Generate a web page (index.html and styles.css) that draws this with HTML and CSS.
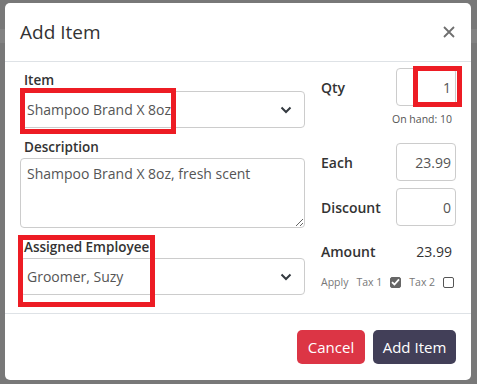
FILE: index.html
```html
<!DOCTYPE html>
<html lang="en">
<head>
    <meta charset="UTF-8">
    <meta name="viewport" content="width=device-width, initial-scale=1.0">
    <title>Add Item</title>
    <link rel="stylesheet" href="styles.css">
</head>
<body>
    <div class="backdrop">
        <div class="page-band"></div>
        <div class="modal">
            <div class="modal-header">
                <h2>Add Item</h2>
                <svg class="close" width="12" height="12" viewBox="0 0 12 12">
                    <path d="M1 1L11 11M11 1L1 11" stroke="#6f6f6f" stroke-width="1.8" fill="none"/>
                </svg>
            </div>

            <div class="modal-body">
                <div class="col-left">
                    <div class="field">
                        <label>Item</label>
                        <div class="select">
                            <span>Shampoo Brand X 8oz</span>
                            <svg width="12" height="8" viewBox="0 0 12 8"><path d="M1.5 1.5L6 6L10.5 1.5" stroke="#343a40" stroke-width="2" fill="none"/></svg>
                        </div>
                        <span class="mark mark-item"></span>
                    </div>
                    <div class="field">
                        <label>Description</label>
                        <textarea>Shampoo Brand X 8oz, fresh scent</textarea>
                    </div>
                    <div class="field">
                        <label>Assigned Employee</label>
                        <div class="select">
                            <span>Groomer, Suzy</span>
                            <svg width="12" height="8" viewBox="0 0 12 8"><path d="M1.5 1.5L6 6L10.5 1.5" stroke="#343a40" stroke-width="2" fill="none"/></svg>
                        </div>
                        <span class="mark mark-employee"></span>
                    </div>
                </div>

                <div class="col-right">
                    <div class="row row-qty">
                        <span class="row-label">Qty</span>
                        <div class="num">1</div>
                        <span class="mark mark-qty"></span>
                    </div>
                    <div class="on-hand">On hand: 10</div>
                    <div class="row row-each">
                        <span class="row-label">Each</span>
                        <div class="num">23.99</div>
                    </div>
                    <div class="row row-discount">
                        <span class="row-label">Discount</span>
                        <div class="num">0</div>
                    </div>
                    <div class="row row-amount">
                        <span class="row-label">Amount</span>
                        <span class="amount">23.99</span>
                    </div>
                    <div class="tax-row">
                        <span>Apply</span>
                        <span class="tax">Tax 1</span>
                        <span class="check checked">
                            <svg width="9" height="8" viewBox="0 0 9 8"><path d="M1 4.2L3.4 6.5L8 1.3" stroke="#fff" stroke-width="1.8" fill="none"/></svg>
                        </span>
                        <span class="tax">Tax 2</span>
                        <span class="check"></span>
                    </div>
                </div>
            </div>

            <div class="modal-footer">
                <button class="btn btn-cancel">Cancel</button>
                <button class="btn btn-add">Add Item</button>
            </div>
        </div>
        <div class="page-logo">Pawz Gr<span>oo</span>m</div>
    </div>
</body>
</html>
```

FILE: styles.css
```css
body {
    margin: 0;
    font-family: "Open Sans", "Noto Sans", sans-serif;
    color: #333;
}

.backdrop {
    position: relative;
    height: 384px;
    padding: 3px 0 0 5px;
    box-sizing: border-box;
    background: #787878;
    overflow: hidden;
}

.page-band {
    position: absolute;
    left: 0;
    right: 0;
    top: 29px;
    height: 14px;
    background: #828282;
}

.page-logo {
    position: absolute;
    top: -26px;
    left: 290px;
    z-index: 2;
    font-size: 24px;
    font-weight: bold;
    font-style: italic;
    color: #222;
}

.page-logo span {
    color: #1a8a86;
}

.modal {
    position: relative;
    width: 466px;
    height: 377px;
    background: #fff;
    border-radius: 5px;
    display: flex;
    flex-direction: column;
    z-index: 1;
}

.modal-header {
    height: 58px;
    padding: 0 15px 0 15px;
    display: flex;
    align-items: center;
    justify-content: space-between;
    border-bottom: 1px solid #dee2e6;
}

.modal-header h2 {
    margin: 0;
    font-size: 19px;
    font-weight: normal;
    color: #333;
}

.close {
    margin-right: 1px;
}

.modal-body {
    display: flex;
    gap: 16px;
    padding: 6px 15px 0 15px;
    height: 245px;
    border-bottom: 1px solid #dee2e6;
}

.col-left {
    width: 285px;
    padding-top: 2px;
}

.field {
    position: relative;
    margin-bottom: 9px;
}

.field label {
    display: block;
    font-size: 13.5px;
    font-weight: 600;
    line-height: 20px;
    padding-left: 4px;
    margin-bottom: 1px;
    color: #333;
}

.select {
    height: 37px;
    box-sizing: border-box;
    border: 1px solid #ccc;
    border-radius: 4px;
    padding: 0 12px 0 6px;
    display: flex;
    align-items: center;
    justify-content: space-between;
    font-size: 14px;
    color: #555;
}

textarea {
    display: block;
    width: 100%;
    height: 70px;
    box-sizing: border-box;
    border: 1px solid #ccc;
    border-radius: 4px;
    padding: 5px 6px;
    font-family: inherit;
    font-size: 14px;
    color: #555;
}

.mark {
    position: absolute;
    border: 5px solid #ed1c24;
    box-sizing: border-box;
}

.mark-item {
    left: 0;
    top: 18px;
    width: 156px;
    height: 46px;
}

.mark-employee {
    left: -2px;
    top: -2px;
    width: 137px;
    height: 72px;
}

.mark-qty {
    left: 92px;
    top: -2px;
    width: 49px;
    height: 41px;
}

.col-right {
    width: 135px;
}

.row {
    position: relative;
    display: flex;
    align-items: center;
    justify-content: space-between;
}

.row-label {
    font-size: 14px;
    font-weight: 600;
    color: #333;
}

.num {
    width: 60px;
    height: 38px;
    box-sizing: border-box;
    border: 1px solid #ccc;
    border-radius: 4px;
    padding: 0 4px;
    display: flex;
    align-items: center;
    justify-content: flex-end;
    font-size: 14px;
    color: #555;
}

.on-hand {
    text-align: right;
    font-size: 10.5px;
    line-height: 16px;
    color: #555;
    margin: 5px 4px 0 0;
}

.row-each {
    margin-top: 16px;
}

.row-discount {
    margin-top: 7px;
}

.row-amount {
    margin-top: 15px;
    height: 20px;
}

.amount {
    font-size: 14px;
    color: #333;
    margin-right: 4px;
}

.tax-row {
    display: flex;
    align-items: center;
    margin-top: 13px;
    height: 16px;
    font-size: 10.5px;
    color: #777;
}

.tax {
    margin-left: 8px;
}

.check {
    width: 11px;
    height: 11px;
    margin-left: 8px;
    box-sizing: border-box;
    border: 1px solid #555;
    border-radius: 2px;
    display: flex;
    align-items: center;
    justify-content: center;
}

.check.checked {
    background: #666;
    border-color: #666;
}

.modal-footer {
    flex: 1;
    display: flex;
    align-items: center;
    justify-content: flex-end;
    gap: 8px;
    padding: 0 15px;
}

.btn {
    height: 34px;
    border: none;
    border-radius: 5px;
    color: #fff;
    font-family: inherit;
    font-size: 15px;
    padding: 0;
}

.btn-cancel {
    width: 68px;
    background: #dc3545;
}

.btn-add {
    width: 83px;
    background: #423f58;
}
```
